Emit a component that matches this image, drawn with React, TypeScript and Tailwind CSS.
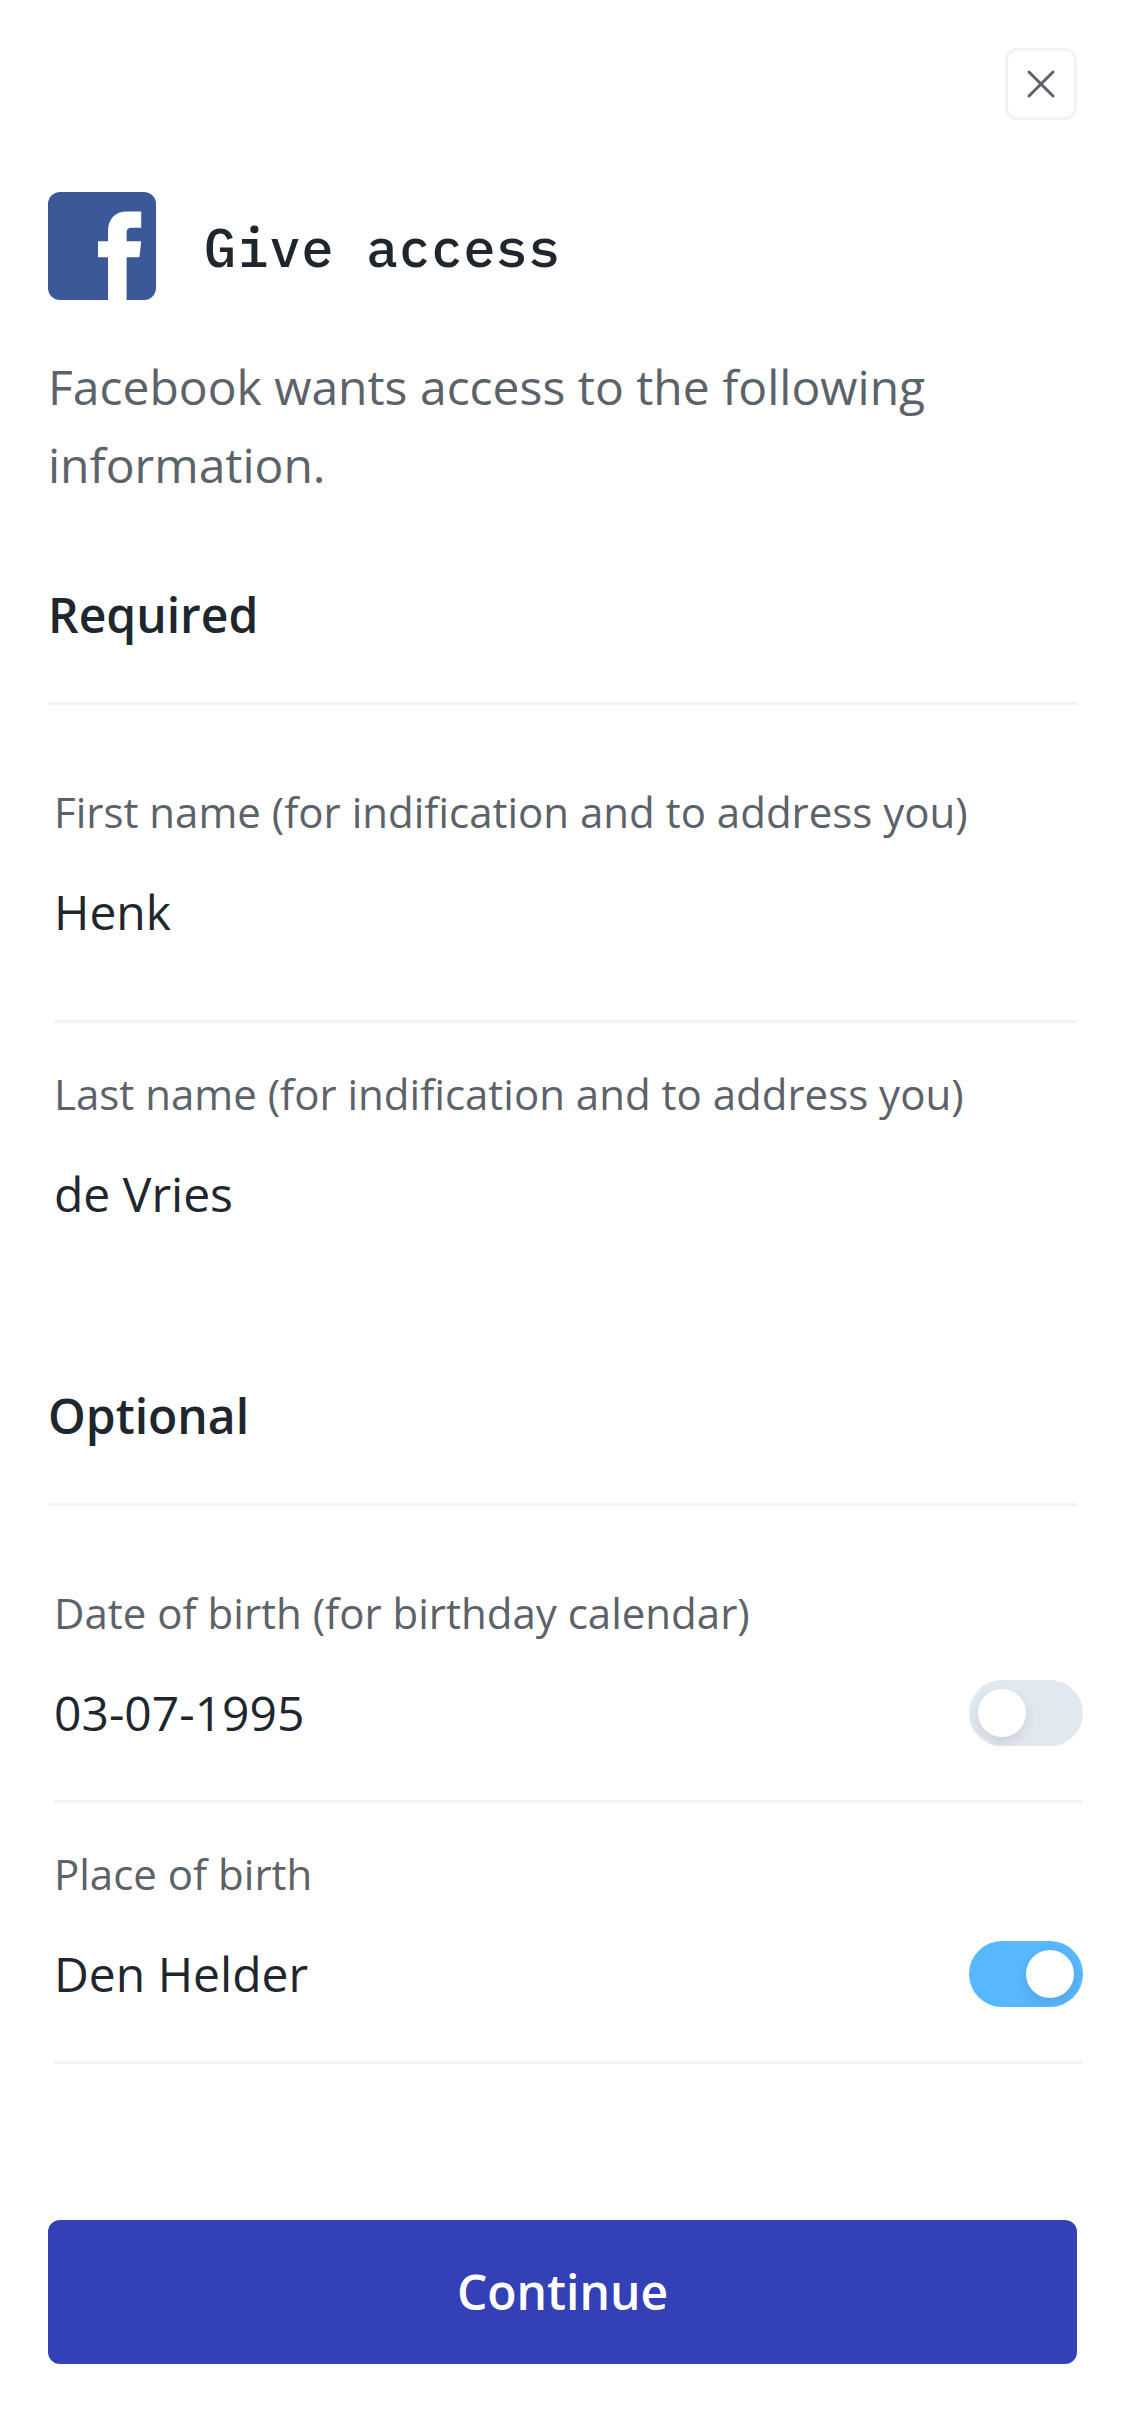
type FieldProps = { label: string; value: string; className: string; toggle?: 'on' | 'off' };

const Toggle = ({ on }: { on: boolean }) => (
  <span className={`flex h-[66px] w-[114px] items-center rounded-full px-[9px] ${on ? 'justify-end bg-[#57b7ff]' : 'justify-start bg-[#e2e8f0]'}`}>
    <span className="size-12 rounded-full bg-white shadow-[0_6px_12px_rgba(39,49,66,0.12)]" />
  </span>
);

const Field = ({ label, value, className, toggle }: FieldProps) => (
  <div className={`ml-[54px] ${className}`}>
    <div className="text-[42px] leading-[63px] whitespace-nowrap text-[#5c6269]">{label}</div>
    <div className="mt-9 flex h-[66px] items-start justify-between text-[48px] leading-[65px] text-[#20262d]">
      <span>{value}</span>
      {toggle && <Toggle on={toggle === 'on'} />}
    </div>
  </div>
);

export default function App() {
  return (
    <main className="flex h-[2436px] w-[1125px] flex-col bg-white font-['Open_Sans',sans-serif]">
      <div className="flex h-48 justify-end pt-12 pr-12">
        <button aria-label="Close" className="flex size-[72px] items-center justify-center rounded-[12px] border-3 border-[#eff3f7]">
          <svg width="30" height="30" viewBox="0 0 30 30" fill="none" stroke="#5c6269" strokeWidth="3" strokeLinecap="round">
            <path d="M3 3 27 27M27 3 3 27" />
          </svg>
        </button>
      </div>
      <header className="ml-12 flex h-[108px] items-center">
        <svg width="108" height="108" viewBox="0 0 108 108">
          <rect width="108" height="108" rx="12" fill="#3b5998" />
          <path fill="#fff" d="M60 108V65.3H50V49.3H60V39.5C60 27 67 19.5 79 19.5H93.2V35.7H84C80 35.7 78.6 37.5 78.6 41V49.3H93.2L91.4 65.3H78.6V108Z" />
        </svg>
        <h1 className="mt-[2px] ml-12 font-['IBM_Plex_Mono','DejaVu_Sans_Mono','Liberation_Mono',monospace] text-[54px] font-medium text-[#20262d]">Give access</h1>
      </header>
      <p className="mt-12 ml-12 text-[48px] leading-[78px] text-[#5c6269]">
        Facebook wants access to the following
        <br />
        information.
      </p>
      <h2 className="mt-[72px] ml-12 text-[48px] leading-[78px] font-semibold text-[#20262d]">Required</h2>
      <hr className="mx-12 mt-12 border-t-3 border-[#eff3f7]" />
      <Field label="First name (for indification and to address you)" value="Henk" className="mt-[75px]" />
      <hr className="mt-[75px] mr-12 ml-[54px] border-t-3 border-[#eff3f7]" />
      <Field label="Last name (for indification and to address you)" value="de Vries" className="mt-[39px]" />
      <h2 className="mt-[150px] ml-12 text-[48px] leading-[78px] font-semibold text-[#20262d]">Optional</h2>
      <hr className="mx-12 mt-12 border-t-3 border-[#f1f3f6]" />
      <Field label="Date of birth (for birthday calendar)" value="03-07-1995" className="mt-[75px] mr-[42px]" toggle="off" />
      <hr className="mt-[54px] mr-[42px] ml-[54px] border-t-3 border-[#eff3f7]" />
      <Field label="Place of birth" value="Den Helder" className="mt-[39px] mr-[42px]" toggle="on" />
      <hr className="mt-[54px] mr-[42px] ml-[54px] border-t-3 border-[#eff3f7]" />
      <button className="mx-12 mt-[156px] h-36 rounded-[12px] bg-[#3340b6] text-[48px] font-semibold text-white">Continue</button>
    </main>
  );
}
